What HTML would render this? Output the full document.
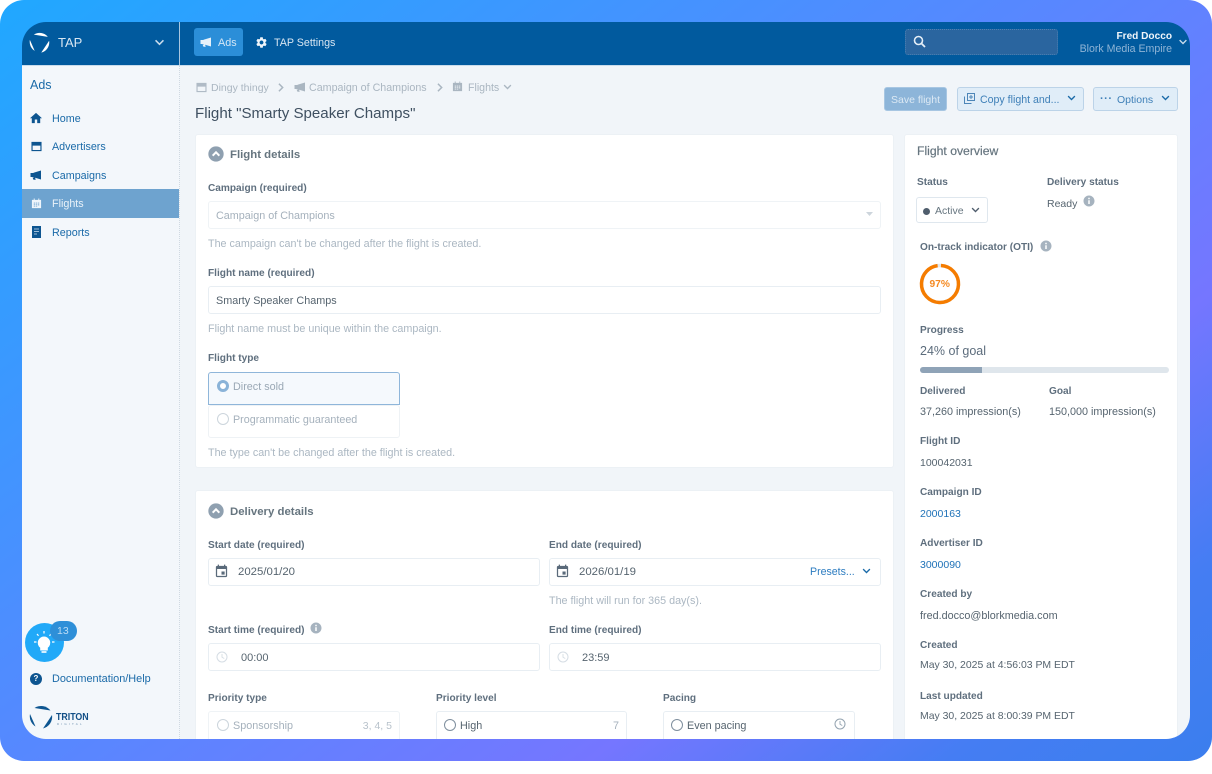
<!DOCTYPE html>
<html><head><meta charset="utf-8">
<style>
html,body{margin:0;padding:0;background:#fff;width:1212px;height:761px;overflow:hidden}
*{box-sizing:border-box}
#bg{position:absolute;left:0;top:0;width:1212px;height:761px;border-radius:24px;background:linear-gradient(143deg,#20a8ff 0%,#7576ff 72%,#457df3 88%,#3b7eee 100%)}
#app{position:absolute;left:0;top:0;width:1212px;height:761px;clip-path:inset(22px 22px 22px 22px round 24px);font-family:"Liberation Sans",sans-serif;font-size:10.8px;color:#56646f;filter:blur(.3px)}
#app div,#app svg{position:absolute}
.t{white-space:nowrap;line-height:14px;height:14px;margin-top:1px}
.t.m{margin-top:2px}
.l{font-weight:bold;font-size:10.1px;color:#5f6f7e;white-space:nowrap;line-height:14px;height:14px;margin-top:2px}
.h{color:#abb7c2;white-space:nowrap;line-height:14px;height:14px;font-size:10.75px;margin-top:2px}
.n{color:#1a6aa8;white-space:nowrap;line-height:14px;height:14px;font-size:10.75px;margin-top:1px}
.b{background:#fff;border:1px solid #e8eef3;border-radius:3px}
.card{background:#fff;border:1px solid #ecf1f5;border-radius:3px}
.ring{border-radius:50%;background:#fff}
</style></head><body>
<div id="bg"></div>
<div id="app">
<svg width="0" height="0" style="position:absolute">
<defs>
<symbol id="event" viewBox="0 0 24 24"><path d="M17 12h-5v5h5v-5zM16 1v2H8V1H6v2H5c-1.11 0-1.99.9-1.99 2L3 19c0 1.1.89 2 2 2h14c1.1 0 2-.9 2-2V5c0-1.1-.9-2-2-2h-1V1h-2zm3 18H5V8h14v11z"/></symbol>
<symbol id="info" viewBox="0 0 24 24"><path d="M12 1C5.930 1 1 5.930 1 12s4.930 11 11 11 11-4.930 11-11S18.070 1 12 1zm1.500 17h-3v-7.500h3V18zm0-9.500h-3V5.500h3v3z"/></symbol>
<symbol id="gear" viewBox="0 0 24 24"><path d="M19.14 12.94c.04-.3.06-.61.06-.94 0-.32-.02-.64-.07-.94l2.03-1.58c.18-.14.23-.41.12-.61l-1.92-3.32c-.12-.22-.37-.29-.59-.22l-2.39.96c-.5-.38-1.03-.7-1.62-.94l-.36-2.54c-.04-.24-.24-.41-.48-.41h-3.84c-.24 0-.43.17-.47.41l-.36 2.54c-.59.24-1.13.57-1.62.94l-2.39-.96c-.22-.08-.47 0-.59.22L2.74 8.87c-.12.21-.08.47.12.61l2.03 1.58c-.05.3-.09.63-.09.94s.02.64.07.94l-2.03 1.58c-.18.14-.23.41-.12.61l1.92 3.32c.12.22.37.29.59.22l2.39-.96c.5.38 1.03.7 1.62.94l.36 2.54c.05.24.24.41.48.41h3.84c.24 0 .44-.17.47-.41l.36-2.54c.59-.24 1.13-.56 1.62-.94l2.39.96c.22.08.47 0 .59-.22l1.92-3.32c.12-.22.07-.47-.12-.61l-2.01-1.58zM12 15.6c-1.98 0-3.6-1.62-3.6-3.6s1.62-3.6 3.6-3.6 3.6 1.62 3.6 3.6-1.62 3.6-3.6 3.6z"/></symbol>
<symbol id="mega" viewBox="0 0 24 24"><path d="M1 8h6v-.500l15-4.500v18l-15-4.500V16H1zM5 17h5l1.500 4.500H7z"/></symbol>
<symbol id="cal" viewBox="0 0 24 24"><path d="M1 2h22v20H1zM3.500 10v9.500h17V10z" fill-rule="evenodd"/></symbol>
<symbol id="flights" viewBox="0 0 24 24"><path d="M6 1h2v3h8V1h2v3h4v18H2V4h4zM6 10v2h3v-2zM10.500 10v2h3v-2zM15 10v2h3v-2zM6 14v2h3v-2zM10.500 14v2h3v-2zM15 14v2h3v-2zM6 18v1h3v-1zM10.500 18v1h3v-1z" fill-rule="evenodd"/></symbol>
<symbol id="clock" viewBox="0 0 24 24"><circle cx="12" cy="12" r="10" fill="none" stroke="currentColor" stroke-width="2"/><path d="M12 6v6.500l4.500 2.500" fill="none" stroke="currentColor" stroke-width="1.800"/></symbol>
<symbol id="chev" viewBox="0 0 12 8"><path d="M1.500 1.500L6 6l4.500-4.500" fill="none" stroke="currentColor" stroke-width="1.800"/></symbol>
<symbol id="cup" viewBox="0 0 24 24"><circle cx="12" cy="12" r="11.500" fill="currentColor"/><path d="M7 14.500l5-5 5 5" fill="none" stroke="#fff" stroke-width="3"/></symbol>
<symbol id="logo" viewBox="0 0 24 24"><path d="M5.500 3A12 12 0 0 1 21.500 5.500Z"/><path d="M1 9A12 12 0 0 0 6.500 21.500Z"/><path d="M23 10A12 12 0 0 1 14 23.500Z"/></symbol>
</defs></svg>

<!-- page -->
<div style="left:22px;top:22px;width:1168px;height:717px;background:#f1f5f9"></div>
<!-- sidebar -->
<div style="left:22px;top:65px;width:158px;height:674px;background:#f3f7fb;border-right:1px dotted #cfd9e2"></div>
<!-- header -->
<div style="left:22px;top:22px;width:1168px;height:43px;background:#015a9e"></div>
<div style="left:22px;top:65px;width:1168px;height:1px;background:#c9dcec"></div>
<div style="left:179px;top:22px;width:1px;height:43px;background:#a9c6df"></div>

<svg style="left:29px;top:32px;fill:#fff" width="21" height="21"><use href="#logo"/></svg>
<div class="t" style="left:58px;top:35px;font-size:13px;color:#d8e6f2">TAP</div>
<svg style="left:154px;top:39px;color:#c9dcec" width="11" height="7"><use href="#chev"/></svg>

<div style="left:194px;top:28px;width:49px;height:28px;background:#2b8ed8;border-radius:3px"></div>
<svg style="left:200px;top:36px;fill:#e6f1fa" width="12" height="12"><use href="#mega"/></svg>
<div class="t" style="left:218px;top:35px;color:#d4e7f6">Ads</div>
<svg style="left:255px;top:36px;fill:#f0f5fa" width="13" height="13"><use href="#gear"/></svg>
<div class="t" style="left:274px;top:35px;color:#d8e6f2;font-size:10.7px">TAP Settings</div>

<div style="left:905px;top:29px;width:153px;height:26px;background:#2a659f;border:1px dotted #4d81b3;border-radius:3px"></div>
<svg style="left:913px;top:35px" width="13" height="13" viewBox="0 0 13 13"><circle cx="5.500" cy="5.500" r="4" fill="none" stroke="#e4eef7" stroke-width="1.600"/><path d="M8.500 8.500L12 12" stroke="#e4eef7" stroke-width="1.800"/></svg>
<div class="t" style="right:40px;top:29px;color:#f0f5fa;font-weight:bold;font-size:10.1px">Fred Docco</div>
<div class="t" style="right:40px;top:41px;color:#8fb4d6;font-size:10.6px">Blork Media Empire</div>
<svg style="left:1178px;top:39px;color:#c9dcec" width="10" height="6"><use href="#chev"/></svg>

<!-- nav -->
<div class="t" style="left:30px;top:77px;font-size:12.500px;color:#1a6aa8">Ads</div>
<svg style="left:30px;top:112px;fill:#0d5590" width="12" height="12" viewBox="2 3 20 17"><path d="M10 20v-6h4v6h5v-8h3L12 3 2 12h3v8z"/></svg>
<div class="n" style="left:52px;top:110.500px">Home</div>
<svg style="left:31px;top:141px;fill:#0d5590" width="11" height="11"><use href="#cal"/></svg>
<div class="n" style="left:52px;top:139px">Advertisers</div>
<svg style="left:30px;top:169px;fill:#0d5590" width="12" height="12"><use href="#mega"/></svg>
<div class="n" style="left:52px;top:167.500px">Campaigns</div>
<div style="left:22px;top:189px;width:157px;height:29px;background:#6ea3cf"></div>
<svg style="left:31px;top:198px;fill:#eef5fb" width="11" height="11"><use href="#flights"/></svg>
<div class="t" style="left:52px;top:196px;color:#e9f2f9;font-size:10.75px">Flights</div>
<svg style="left:32px;top:226px" width="9" height="12" viewBox="0 0 9 12"><path d="M0 0h9v12H0z" fill="#0d5590"/><path d="M2 3h5M2 5.500h5M2 8h3" stroke="#cfe0ee" stroke-width=".8"/></svg>
<div class="n" style="left:52px;top:224.500px">Reports</div>

<div style="left:25px;top:623px;width:39px;height:39px;border-radius:50%;background:#21a9f8"></div>
<svg style="left:31px;top:630px" width="26" height="26" viewBox="0 0 26 26"><path d="M13 6.500a6.300 6.300 0 0 1 3.800 11.300V20.500h-7.600v-2.700A6.300 6.300 0 0 1 13 6.500z" fill="#fff"/><path d="M10.500 22h5" stroke="#fff" stroke-width="1.600"/><path d="M13 1v2.500M6 4l1.500 1.800M20 4l-1.500 1.800M3 12h2.500M21 12h2.500" stroke="#fff" stroke-width="1.200"/></svg>
<div style="left:50px;top:621px;width:27px;height:20px;border-radius:10px;background:#2e8fd8"></div>
<div class="t" style="left:57px;top:623px;font-size:10.500px;color:#bcdcf5">13</div>
<div style="left:30px;top:673px;width:12px;height:12px;border-radius:50%;background:#0d5590"></div>
<div class="t" style="left:33.500px;top:671px;font-size:8px;font-weight:bold;color:#fff">?</div>
<div class="n" style="left:52px;top:671px;font-size:10.9px">Documentation/Help</div>
<svg style="left:29px;top:705px;fill:#0d5590" width="24" height="24"><use href="#logo"/></svg>
<div class="t" style="left:56px;top:709px;font-weight:bold;font-size:10.500px;color:#124f86;transform:scaleX(.84);transform-origin:left">TRITON</div>
<div class="t" style="left:57px;top:716px;font-size:3px;letter-spacing:2.200px;color:#6d8fae">DIGITAL</div>

<!-- breadcrumb -->
<svg style="left:196px;top:82px;fill:#b0bbc6" width="11" height="11"><use href="#cal"/></svg>
<div class="t" style="left:211px;top:80px;color:#aab6c1;font-size:10.5px">Dingy thingy</div>
<svg style="left:276px;top:84px;color:#aab6c1;transform:rotate(-90deg)" width="10" height="7"><use href="#chev"/></svg>
<svg style="left:294px;top:81px;fill:#aab6c1" width="12" height="12"><use href="#mega"/></svg>
<div class="t" style="left:309px;top:80px;color:#aab6c1;font-size:10.7px">Campaign of Champions</div>
<svg style="left:435px;top:84px;color:#aab6c1;transform:rotate(-90deg)" width="10" height="7"><use href="#chev"/></svg>
<svg style="left:452px;top:81px;fill:#aab6c1" width="11" height="11"><use href="#flights"/></svg>
<div class="t" style="left:468px;top:80px;color:#aab6c1;font-size:10.6px">Flights</div>
<svg style="left:503px;top:84px;color:#aab6c1" width="9" height="6"><use href="#chev"/></svg>
<div class="t m" style="left:195px;top:103px;height:18px;line-height:18px;font-size:15.100px;color:#3f5061">Flight "Smarty Speaker Champs"</div>

<!-- buttons -->
<div style="left:884px;top:87px;width:63px;height:24px;background:#8db5d9;border-radius:3px;border:1px solid #a7c6e2"></div>
<div class="t m" style="left:891px;top:91px;color:#dce9f4;font-size:10.500px">Save flight</div>
<div style="left:957px;top:87px;width:127px;height:24px;background:#e0edf8;border-radius:3px;border:1px solid #bcd3e8"></div>
<svg style="left:964px;top:93px" width="11" height="11" viewBox="0 0 11 11"><path d="M3.500.5h7v7h-7zM.5 3.500v7h7" fill="none" stroke="#4d86b8"/><path d="M7 2v4M5 4h4" stroke="#4d86b8"/></svg>
<div class="t m" style="left:980px;top:91px;color:#3f80b8;font-size:10.600px">Copy flight and...</div>
<svg style="left:1067px;top:95px;color:#1a6aa8" width="9" height="6"><use href="#chev"/></svg>
<div style="left:1093px;top:87px;width:85px;height:24px;background:#e0edf8;border-radius:3px;border:1px solid #bcd3e8"></div>
<div class="t" style="left:1100px;top:91px;color:#3f80b8;font-size:11px;font-weight:bold;letter-spacing:.5px">···</div>
<div class="t m" style="left:1117px;top:91px;color:#3f80b8;font-size:10.500px">Options</div>
<svg style="left:1161px;top:95px;color:#1a6aa8" width="9" height="6"><use href="#chev"/></svg>

<!-- Flight details -->
<div class="card" style="left:195px;top:134px;width:699px;height:334px"></div>
<svg style="left:208px;top:146px;color:#8fa0b0" width="16" height="16"><use href="#cup"/></svg>
<div class="t m" style="left:230px;top:146px;font-size:11.400px;font-weight:bold;color:#66757f">Flight details</div>
<div class="l" style="left:208px;top:180px">Campaign (required)</div>
<div class="b" style="left:208px;top:201px;width:673px;height:28px;border-color:#eff3f6"></div>
<div class="t m" style="left:216px;top:207px;color:#a5b1bc">Campaign of Champions</div>
<svg style="left:866px;top:212px" width="7" height="4" viewBox="0 0 7 4"><path d="M0 0h7L3.500 4z" fill="#cdd5dc"/></svg>
<div class="h" style="left:208px;top:235px">The campaign can't be changed after the flight is created.</div>
<div class="l" style="left:208px;top:265px">Flight name (required)</div>
<div class="b" style="left:208px;top:286px;width:673px;height:28px"></div>
<div class="t m" style="left:216px;top:292px;color:#56646f">Smarty Speaker Champs</div>
<div class="h" style="left:208px;top:320px">Flight name must be unique within the campaign.</div>
<div class="l" style="left:208px;top:350px">Flight type</div>
<div class="b" style="left:208px;top:405px;width:192px;height:33px;border-color:#eef2f5"></div>
<div style="left:208px;top:372px;width:192px;height:33px;background:#f5f9fd;border:1px solid #8fb6da;border-radius:3px 3px 0 0"></div>
<div class="ring" style="left:217px;top:380px;width:12px;height:12px;border:3px solid #8ab3d8"></div>
<div class="t m" style="left:233px;top:378px;color:#9aa8b5">Direct sold</div>
<div class="ring" style="left:217px;top:413px;width:12px;height:12px;border:1px solid #ccd5dc"></div>
<div class="t m" style="left:233px;top:411px;color:#a5b1bc;font-size:10.75px">Programmatic guaranteed</div>
<div class="h" style="left:208px;top:444px">The type can't be changed after the flight is created.</div>

<!-- Delivery details -->
<div class="card" style="left:195px;top:490px;width:699px;height:280px"></div>
<svg style="left:208px;top:503px;color:#8fa0b0" width="16" height="16"><use href="#cup"/></svg>
<div class="t m" style="left:230px;top:503px;font-size:11.400px;font-weight:bold;color:#66757f">Delivery details</div>
<div class="l" style="left:208px;top:537px">Start date (required)</div>
<div class="l" style="left:549px;top:537px">End date (required)</div>
<div class="b" style="left:208px;top:558px;width:332px;height:28px"></div>
<div class="b" style="left:549px;top:558px;width:332px;height:28px"></div>
<svg style="left:214px;top:564px;fill:#5a6a7a" width="15" height="15"><use href="#event"/></svg>
<svg style="left:555px;top:564px;fill:#5a6a7a" width="15" height="15"><use href="#event"/></svg>
<div class="t m" style="left:238px;top:563px;color:#56646f;font-size:11.400px">2025/01/20</div>
<div class="t m" style="left:579px;top:563px;color:#56646f;font-size:11.400px">2026/01/19</div>
<div class="t m" style="left:810px;top:563px;color:#2c7cc0;font-size:10.600px">Presets...</div>
<svg style="left:862px;top:568px;color:#1a6aa8" width="9" height="6"><use href="#chev"/></svg>
<div class="h" style="left:549px;top:592px">The flight will run for 365 day(s).</div>
<div class="l" style="left:208px;top:622px">Start time (required)</div>
<svg style="left:310px;top:622px;fill:#a6b3bf" width="12" height="12"><use href="#info"/></svg>
<div class="l" style="left:549px;top:622px">End time (required)</div>
<div class="b" style="left:208px;top:643px;width:332px;height:28px"></div>
<div class="b" style="left:549px;top:643px;width:332px;height:28px"></div>
<svg style="left:216px;top:651px;color:#d5dde4" width="12" height="12"><use href="#clock"/></svg>
<svg style="left:557px;top:651px;color:#d5dde4" width="12" height="12"><use href="#clock"/></svg>
<div class="t m" style="left:241px;top:649px;color:#56646f;font-size:11px">00:00</div>
<div class="t m" style="left:582px;top:649px;color:#56646f;font-size:11px">23:59</div>
<div class="l" style="left:208px;top:690px">Priority type</div>
<div class="l" style="left:436px;top:690px">Priority level</div>
<div class="l" style="left:663px;top:690px">Pacing</div>
<div class="b" style="left:208px;top:711px;width:192px;height:40px;border-color:#eff3f6"></div>
<div class="b" style="left:436px;top:711px;width:191px;height:40px"></div>
<div class="b" style="left:663px;top:711px;width:192px;height:40px"></div>
<div class="ring" style="left:217px;top:719px;width:12px;height:12px;border:1px solid #ccd5dc"></div>
<div class="t m" style="left:233px;top:717px;color:#a5b1bc">Sponsorship</div>
<div class="t m" style="right:820px;top:717px;color:#b8c2cb;font-size:10.500px">3, 4, 5</div>
<div class="ring" style="left:444px;top:719px;width:12px;height:12px;border:1.300px solid #7f8f9e"></div>
<div class="t m" style="left:460px;top:717px;color:#56646f">High</div>
<div class="t m" style="right:593px;top:717px;color:#a5b1bc">7</div>
<div class="ring" style="left:671px;top:719px;width:12px;height:12px;border:1.300px solid #7f8f9e"></div>
<div class="t m" style="left:687px;top:717px;color:#56646f">Even pacing</div>
<svg style="left:834px;top:718px;color:#94a3b0" width="12" height="12"><use href="#clock"/></svg>

<!-- Overview -->
<div class="card" style="left:904px;top:134px;width:274px;height:640px"></div>
<div class="t" style="left:917px;top:143px;font-size:12.200px;color:#66757f;-webkit-text-stroke:.2px #66757f">Flight overview</div>
<div class="l" style="left:917px;top:174px">Status</div>
<div class="l" style="left:1047px;top:174px">Delivery status</div>
<div class="b" style="left:916px;top:197px;width:72px;height:26px;border-color:#dfe7ee"></div>
<div style="left:923px;top:207.500px;width:7px;height:7px;border-radius:50%;background:#4f5d6c"></div>
<div class="t" style="left:935px;top:203px;color:#66757f;font-size:10.500px">Active</div>
<svg style="left:971px;top:207px;color:#4f5d6c" width="9" height="6"><use href="#chev"/></svg>
<div class="t m" style="left:1047px;top:195px;color:#56646f;font-size:10.500px">Ready</div>
<svg style="left:1083px;top:195px;fill:#a6b3bf" width="12" height="12"><use href="#info"/></svg>
<div class="l" style="left:920px;top:239px">On-track indicator (OTI)</div>
<svg style="left:1040px;top:240px;fill:#a6b3bf" width="12" height="12"><use href="#info"/></svg>
<svg style="left:918px;top:262px" width="44" height="44" viewBox="0 0 44 44"><circle cx="22" cy="22" r="18.500" fill="none" stroke="#e3e8ec" stroke-width="3.500"/><circle cx="22" cy="22" r="18.500" fill="none" stroke="#f57c00" stroke-width="3.500" stroke-dasharray="112.700 116.200" transform="rotate(-87 22 22)"/></svg>
<div class="t m" style="left:929.500px;top:275.500px;color:#f58a22;font-weight:bold;font-size:10.200px">97%</div>
<div class="l" style="left:920px;top:322px">Progress</div>
<div class="t" style="left:920px;top:343px;color:#5c6c7c;font-size:12.500px">24% of goal</div>
<div style="left:920px;top:367px;width:249px;height:6px;background:#dfe6ec;border-radius:3px"></div>
<div style="left:920px;top:367px;width:62px;height:6px;background:#8fa3b7;border-radius:3px 0 0 3px"></div>
<div class="l" style="left:920px;top:383px">Delivered</div>
<div class="l" style="left:1049px;top:383px">Goal</div>
<div class="t m" style="left:920px;top:403px">37,260 impression(s)</div>
<div class="t m" style="left:1049px;top:403px">150,000 impression(s)</div>
<div class="l" style="left:920px;top:433px">Flight ID</div>
<div class="t m" style="left:920px;top:454px;font-size:10.500px">100042031</div>
<div class="l" style="left:920px;top:484px">Campaign ID</div>
<div class="t m" style="left:920px;top:505px;font-size:10.500px;color:#1f72b8">2000163</div>
<div class="l" style="left:920px;top:535px">Advertiser ID</div>
<div class="t m" style="left:920px;top:556px;font-size:10.500px;color:#1f72b8">3000090</div>
<div class="l" style="left:920px;top:586px">Created by</div>
<div class="t m" style="left:920px;top:607px;font-size:10.800px">fred.docco@blorkmedia.com</div>
<div class="l" style="left:920px;top:637px">Created</div>
<div class="t m" style="left:920px;top:657px;font-size:10.450px">May 30, 2025 at 4:56:03 PM EDT</div>
<div class="l" style="left:920px;top:688px">Last updated</div>
<div class="t m" style="left:920px;top:708px;font-size:10.450px">May 30, 2025 at 8:00:39 PM EDT</div>
</div>
</body></html>
